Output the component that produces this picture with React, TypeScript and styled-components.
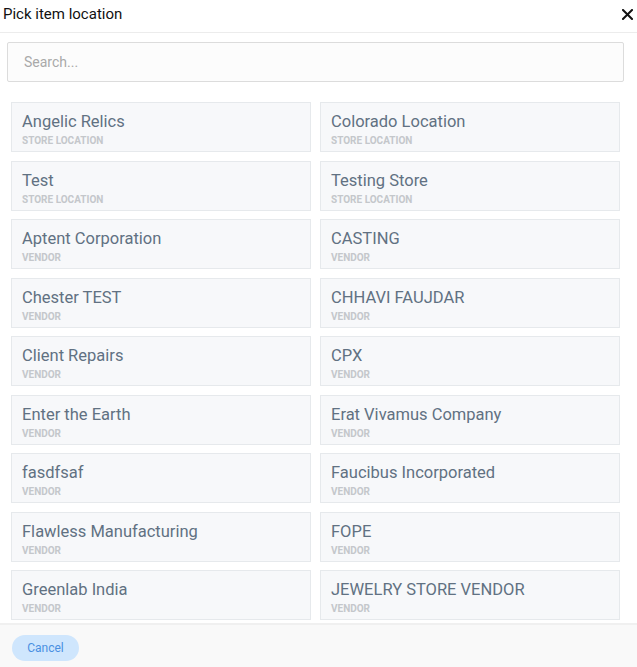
import * as React from 'react';
import styled, { createGlobalStyle } from 'styled-components';

interface Location {
  name: string;
  kind: string;
}

const locations: Location[] = [
  { name: 'Angelic Relics', kind: 'Store Location' },
  { name: 'Colorado Location', kind: 'Store Location' },
  { name: 'Test', kind: 'Store Location' },
  { name: 'Testing Store', kind: 'Store Location' },
  { name: 'Aptent Corporation', kind: 'Vendor' },
  { name: 'CASTING', kind: 'Vendor' },
  { name: 'Chester TEST', kind: 'Vendor' },
  { name: 'CHHAVI FAUJDAR', kind: 'Vendor' },
  { name: 'Client Repairs', kind: 'Vendor' },
  { name: 'CPX', kind: 'Vendor' },
  { name: 'Enter the Earth', kind: 'Vendor' },
  { name: 'Erat Vivamus Company', kind: 'Vendor' },
  { name: 'fasdfsaf', kind: 'Vendor' },
  { name: 'Faucibus Incorporated', kind: 'Vendor' },
  { name: 'Flawless Manufacturing', kind: 'Vendor' },
  { name: 'FOPE', kind: 'Vendor' },
  { name: 'Greenlab India', kind: 'Vendor' },
  { name: 'JEWELRY STORE VENDOR', kind: 'Vendor' },
];

const App = () => (
  <>
    <GlobalStyle />
    <Modal>
      <Header>
        <Title>Pick item location</Title>
        <CloseButton aria-label="Close">
          <svg width="11" height="11" viewBox="0 0 11 11">
            <path d="M1 1L10 10M10 1L1 10" stroke="#111" strokeWidth="2" strokeLinecap="square" />
          </svg>
        </CloseButton>
      </Header>
      <SearchWrap>
        <SearchInput placeholder="Search..." />
      </SearchWrap>
      <List>
        {locations.map((loc) => (
          <Card key={loc.name}>
            <Name>{loc.name}</Name>
            <Kind>{loc.kind}</Kind>
          </Card>
        ))}
      </List>
      <Footer>
        <CancelButton>Cancel</CancelButton>
      </Footer>
    </Modal>
  </>
);

const GlobalStyle = createGlobalStyle`
  html, body {
    margin: 0;
    padding: 0;
    background: #fff;
    font-family: Roboto, "Liberation Sans", Arial, sans-serif;
  }
  * { box-sizing: border-box; }
`;

const Modal = styled.div`
  width: 637px;
  height: 667px;
  display: flex;
  flex-direction: column;
  background: #fff;
  overflow: hidden;
`;

const Header = styled.div`
  height: 33px;
  display: flex;
  align-items: center;
  justify-content: space-between;
  padding: 0 4px 4px 3px;
  border-bottom: 1px solid #ececec;
`;

const Title = styled.h1`
  margin: 0;
  font-size: 15px;
  font-weight: 400;
  color: #111;
`;

const CloseButton = styled.button`
  border: 0;
  background: none;
  padding: 0;
  display: flex;
  cursor: pointer;
`;

const SearchWrap = styled.div`
  padding: 9px 13px 0 7px;
`;

const SearchInput = styled.input`
  width: 100%;
  height: 40px;
  border: 1px solid #dcdcdc;
  border-radius: 2px;
  background: #fcfcfc;
  padding: 0 16px;
  font-family: inherit;
  font-size: 14px;
  color: #333;
  outline: none;

  &::placeholder {
    color: #a9a9a9;
  }
`;

const List = styled.div`
  flex: 1;
  display: grid;
  grid-template-columns: 300px 300px;
  column-gap: 9px;
  row-gap: 8.5px;
  align-content: start;
  padding: 20px 17px 0 11px;
  overflow: hidden;
`;

const Card = styled.div`
  height: 50px;
  border: 1px solid #e6e9ec;
  background: #f7f8fa;
  padding: 9px 10px 0 10px;
  display: flex;
  flex-direction: column;
  cursor: pointer;
`;

const Name = styled.div`
  font-size: 16.5px;
  line-height: 20px;
  color: #617182;
  white-space: nowrap;
`;

const Kind = styled.div`
  margin-top: 3px;
  font-size: 10px;
  line-height: 12px;
  font-weight: 700;
  text-transform: uppercase;
  color: #c4c7cb;
`;

const Footer = styled.div`
  height: 44px;
  flex-shrink: 0;
  border-top: 2px solid #f0f0f0;
  background: #f9f9f9;
  padding: 10px 12px 0;
`;

const CancelButton = styled.button`
  width: 67px;
  height: 26px;
  border: 0;
  border-radius: 13px;
  background: #cfe6fd;
  color: #4a90e2;
  font-family: inherit;
  font-size: 12px;
  cursor: pointer;
`;

export default App;
